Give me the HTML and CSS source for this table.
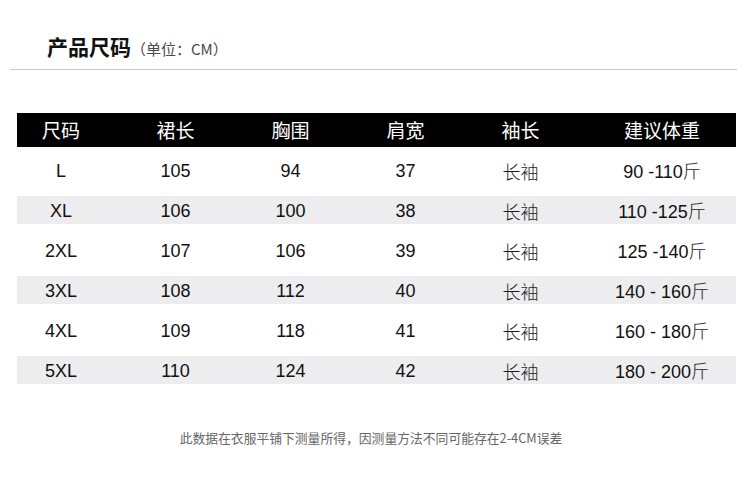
FILE: index.html
```html
<!DOCTYPE html>
<html lang="zh-CN">
<head>
<meta charset="utf-8">
<title>产品尺码</title>
<link rel="stylesheet" href="styles.css">
</head>
<body>
<div class="page">
  <div class="title">
    <span class="title-main">产品尺码</span>
    <span class="title-unit">（单位：CM）</span>
  </div>
  <div class="rule"></div>

  <div class="table">
    <div class="row head">
      <div class="cell c1">尺码</div>
      <div class="cell">裙长</div>
      <div class="cell">胸围</div>
      <div class="cell">肩宽</div>
      <div class="cell">袖长</div>
      <div class="cell c6">建议体重</div>
    </div>
    <div class="body">
      <div class="row">
        <div class="cell c1">L</div>
        <div class="cell">105</div>
        <div class="cell">94</div>
        <div class="cell">37</div>
        <div class="cell cjk">长袖</div>
        <div class="cell c6">90 -110<span class="cjk">斤</span></div>
      </div>
      <div class="row alt">
        <div class="cell c1">XL</div>
        <div class="cell">106</div>
        <div class="cell">100</div>
        <div class="cell">38</div>
        <div class="cell cjk">长袖</div>
        <div class="cell c6">110 -125<span class="cjk">斤</span></div>
      </div>
      <div class="row">
        <div class="cell c1">2XL</div>
        <div class="cell">107</div>
        <div class="cell">106</div>
        <div class="cell">39</div>
        <div class="cell cjk">长袖</div>
        <div class="cell c6">125 -140<span class="cjk">斤</span></div>
      </div>
      <div class="row alt">
        <div class="cell c1">3XL</div>
        <div class="cell">108</div>
        <div class="cell">112</div>
        <div class="cell">40</div>
        <div class="cell cjk">长袖</div>
        <div class="cell c6">140 - 160<span class="cjk">斤</span></div>
      </div>
      <div class="row">
        <div class="cell c1">4XL</div>
        <div class="cell">109</div>
        <div class="cell">118</div>
        <div class="cell">41</div>
        <div class="cell cjk">长袖</div>
        <div class="cell c6">160 - 180<span class="cjk">斤</span></div>
      </div>
      <div class="row alt">
        <div class="cell c1">5XL</div>
        <div class="cell">110</div>
        <div class="cell">124</div>
        <div class="cell">42</div>
        <div class="cell cjk">长袖</div>
        <div class="cell c6">180 - 200<span class="cjk">斤</span></div>
      </div>
    </div>
  </div>

  <p class="note">此数据在衣服平铺下测量所得，因测量方法不同可能存在2-4CM误差</p>
</div>
</body>
</html>
```

FILE: styles.css
```css
html, body {
  margin: 0;
  padding: 0;
  background: #ffffff;
}

.page {
  width: 750px;
  height: 491px;
  font-family: "Liberation Sans", "Noto Sans CJK SC", sans-serif;
  color: #111111;
}

.title {
  display: flex;
  align-items: baseline;
  padding: 34px 0 0 47px;
  height: 25px;
}

.title-main {
  font-family: "Noto Sans CJK SC", sans-serif;
  font-weight: 700;
  font-size: 21px;
  line-height: 25px;
  color: #111111;
}

.title-unit {
  font-family: "Noto Sans CJK SC", sans-serif;
  font-size: 15px;
  line-height: 25px;
  color: #4a4a4a;
}

.rule {
  margin: 10px 0 0 10px;
  width: 727px;
  height: 1px;
  background: #c9c9c9;
}

.table {
  margin: 43px 0 0 17px;
  width: 719px;
}

.row {
  display: grid;
  grid-template-columns: 101px 115px 115px 115px 115px 1fr;
  align-items: center;
  height: 28px;
}

.row.head {
  height: 34px;
  background: #000000;
  color: #ffffff;
  font-family: "Noto Sans CJK SC", sans-serif;
  font-size: 19px;
}

.body {
  display: flex;
  flex-direction: column;
  gap: 12px;
  margin-top: 9px;
}

.row.alt {
  background: #ededef;
}

.cell {
  text-align: center;
  font-size: 18px;
  line-height: 28px;
  white-space: nowrap;
}

.head .cell {
  font-size: 19px;
  line-height: 34px;
}

.cell.c1 {
  padding-right: 13px;
}

.cell.c6 {
  padding-left: 10px;
}

.cjk {
  font-family: "Noto Sans CJK SC", sans-serif;
  font-weight: 300;
  color: #1a1a1a;
}

.note {
  margin: 45px 0 0 0;
  padding-right: 8px;
  text-align: center;
  font-family: "Noto Sans CJK SC", sans-serif;
  font-size: 12.8px;
  line-height: 18px;
  color: #666666;
}
```
